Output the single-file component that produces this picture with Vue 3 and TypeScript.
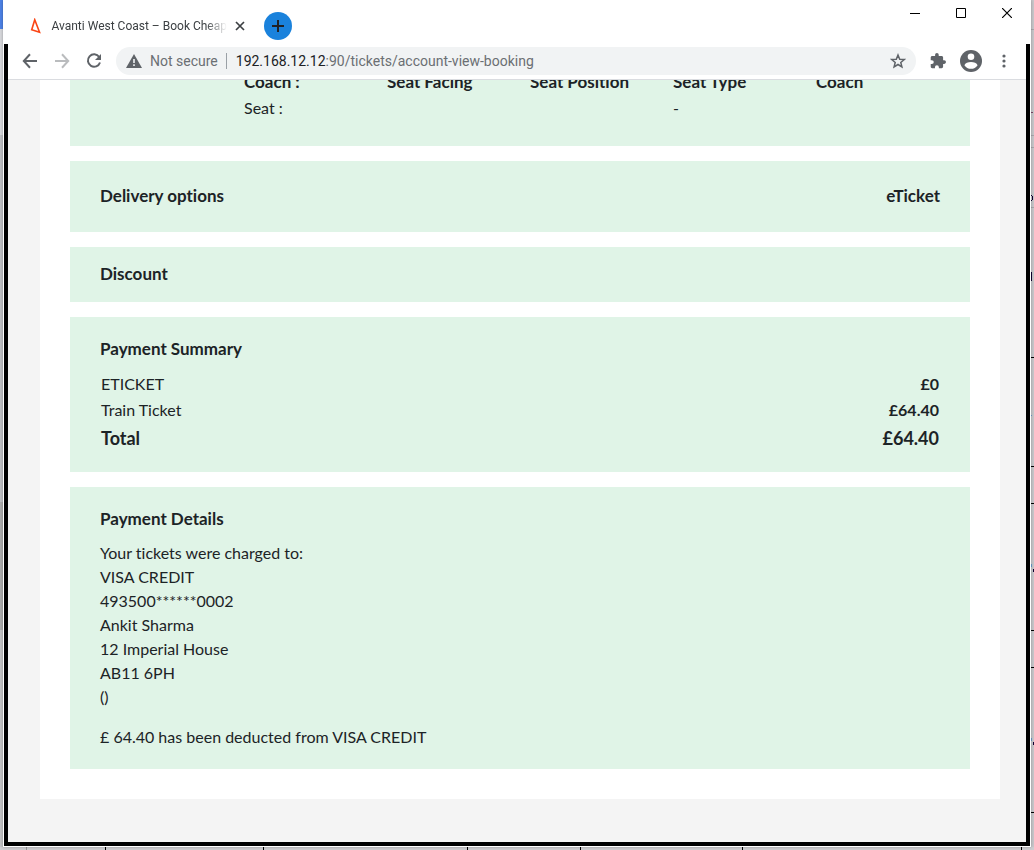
<script setup lang="ts">
interface PriceRow {
  label: string
  price: string
  total?: boolean
}

const seatHeads: string[] = ['Coach :', 'Seat Facing', 'Seat Position', 'Seat Type', 'Coach']
const seatCells: string[] = ['Seat :', '', '', '-', '']

const prices: PriceRow[] = [
  { label: 'ETICKET', price: '£0' },
  { label: 'Train Ticket', price: '£64.40' },
  { label: 'Total', price: '£64.40', total: true },
]

const chargedTo: string[] = [
  'Your tickets were charged to:',
  'VISA CREDIT',
  '493500******0002',
  'Ankit Sharma',
  '12 Imperial House',
  'AB11 6PH',
  '()',
]
</script>

<template>
  <div class="desktop">
    <svg class="edge-left" width="3" height="850" aria-hidden="true">
      <path fill="#d7d8dc" d="M0 0h3v135H0z" />
      <path fill="#4d82e6" d="M0 0h3v29H0z" />
      <path fill="#bfc0c4" d="M0 135h3v367H0z" />
      <path fill="#adadad" d="M0 502h3v128H0z" />
      <path fill="#c4c4c6" d="M0 630h3v220H0z" />
    </svg>
    <svg class="edge-right" width="3" height="850" aria-hidden="true">
      <path fill="#c9c8cb" d="M0 0h3v850H0z" />
      <path fill="#aaa9ad" d="M0 29h3v1H0zM0 135h3v1H0zM0 147h3v1H0zM0 207h3v1H0z" />
      <path fill="#000" d="M0 357h3v1H0zM0 466h3v1H0zM0 503h3v1H0zM0 630h3v1H0zM0 667h3v1H0zM0 812h3v1H0z" />
      <path fill="#7c4866" d="M1 107h1v5H0v1h2v-6z" />
      <path fill="#100030" d="M0 195h1v1h1v4H1v1H0v-1h1v-4H0zM0 272h1v9H0zM2 569h1v3H2zM2 742h1v3H2z" />
      <path fill="#6e9fcf" d="M0 564h1v3H0zM0 738h1v3H0zM0 415h1v1H0z" />
    </svg>
    <svg class="edge-bottom" width="1034" height="3" aria-hidden="true">
      <path fill="#cfced1" d="M0 0h1034v3H0z" />
      <path fill="#999" d="M26 0h1v3h-1z" />
      <path fill="#000" d="M105 0h1v3h-1zM263 0h1v3h-1zM467 0h1v3h-1zM580 0h1v3h-1zM742 0h1v3h-1zM1021 0h1v3h-1z" />
    </svg>

    <div class="window">
      <header class="titlebar">
        <div class="tab">
          <svg width="12" height="16" viewBox="0 0 12 16" fill="none" stroke="#fa4616" stroke-width="1.7" aria-hidden="true">
            <path d="M5 1.5 1.8 12l8.2 2.5L5 1.5z" />
          </svg>
          <span class="tab-title">Avanti West Coast – Book Cheap</span>
          <button class="plain" aria-label="Close tab">
            <svg width="10" height="10" viewBox="0 0 10 10" stroke="#3c4043" stroke-width="1.7"><path d="m1 1 8 8M9 1 1 9" /></svg>
          </button>
        </div>
        <button class="new-tab" aria-label="New tab">
          <svg width="12" height="12" viewBox="0 0 12 12" stroke="#202124" stroke-width="2"><path d="M6 0v12M0 6h12" /></svg>
        </button>
        <div class="controls">
          <button class="plain" aria-label="Minimize">
            <svg width="10" height="10" viewBox="0 0 10 10" stroke="#000"><path d="M0 5.5h10" /></svg>
          </button>
          <button class="plain" aria-label="Maximize">
            <svg width="10" height="10" viewBox="0 0 10 10" stroke="#000" fill="none"><path d="M.5.5h9v9h-9z" /></svg>
          </button>
          <button class="plain" aria-label="Close">
            <svg width="10" height="10" viewBox="0 0 10 10" stroke="#000" stroke-width="1.2"><path d="m0 0 10 10M10 0 0 10" /></svg>
          </button>
        </div>
      </header>

      <div class="frame">
        <nav class="toolbar" aria-label="Browser">
          <div class="nav-buttons">
            <button class="plain" aria-label="Back">
              <svg width="16" height="16" viewBox="0 0 16 16" stroke="#5f6368" stroke-width="2" fill="none"><path d="M15 8H2M8 1.300 1.800 8 8 14.700" /></svg>
            </button>
            <button class="plain" aria-label="Forward">
              <svg width="16" height="16" viewBox="0 0 16 16" stroke="#babcbe" stroke-width="2" fill="none"><path d="M1 8h13M8 1.300 14.200 8 8 14.700" /></svg>
            </button>
            <button class="plain" aria-label="Reload">
              <svg width="16" height="16" viewBox="0 0 16 16"><path fill="none" stroke="#5f6368" stroke-width="2" d="M13.200 4A6.200 6.200 0 1 0 14 9.500" /><path fill="#5f6368" d="M15 1v6H9z" /></svg>
            </button>
          </div>
          <div class="address">
            <svg width="16" height="14" viewBox="0 0 16 14" aria-hidden="true"><path fill="#5f6368" d="M8 0 16 14H0z" /><path fill="#f1f3f4" d="M7.200 5h1.600v4H7.200zM7.200 10.200h1.600v1.700H7.200z" /></svg>
            <span class="insecure">Not secure</span>
            <span class="url"><b>192.168.12.12</b>:90/tickets/account-view-booking</span>
            <button class="plain" aria-label="Bookmark this tab">
              <svg width="16" height="16" viewBox="0 0 16 16" fill="none" stroke="#5f6368" stroke-width="1.500"><path d="m8 2 1.700 4.200 4.600.300-3.500 3 1.100 4.400L8 11.500l-3.900 2.400 1.100-4.400-3.500-3 4.600-.300z" /></svg>
            </button>
          </div>
          <button class="plain" aria-label="Extensions">
            <svg width="16" height="16" viewBox="1 1 22 22" fill="#5f6368"><path d="M20.500 11H19V7c0-1.100-.900-2-2-2h-4V3.500a2.500 2.500 0 0 0-5 0V5H4c-1.100 0-2 .900-2 2v3.800h1.500a2.700 2.700 0 0 1 0 5.400H2V20c0 1.100.900 2 2 2h3.800v-1.500a2.700 2.700 0 0 1 5.400 0V22H17c1.100 0 2-.900 2-2v-4h1.500a2.500 2.500 0 0 0 0-5z" /></svg>
          </button>
          <button class="plain" aria-label="Profile">
            <svg width="22" height="22" viewBox="0 0 22 22"><circle cx="11" cy="11" r="11" fill="#5f6368" /><circle cx="11" cy="6.700" r="3.300" fill="#fff" /><path fill="#fff" d="M4.400 15.300C5.200 12.900 8 12.100 11 12.100s5.800.800 6.600 3.200a7.900 7.900 0 0 1-13.200 0z" /></svg>
          </button>
          <button class="plain menu" aria-label="Menu">
            <svg width="4" height="14" viewBox="0 0 4 14" fill="#5f6368"><circle cx="2" cy="2" r="1.600" /><circle cx="2" cy="7" r="1.600" /><circle cx="2" cy="12" r="1.600" /></svg>
          </button>
        </nav>

        <div class="viewport">
          <main class="booking">
            <section class="seats">
              <table>
                <thead>
                  <tr>
                    <td></td>
                    <th v-for="(head, i) in seatHeads" :key="i" scope="col">{{ head }}</th>
                  </tr>
                </thead>
                <tbody>
                  <tr>
                    <td></td>
                    <td v-for="(cell, i) in seatCells" :key="i">{{ cell }}</td>
                  </tr>
                </tbody>
              </table>
            </section>

            <section class="delivery">
              <h2>Delivery options</h2>
              <strong>eTicket</strong>
            </section>

            <section class="discount">
              <h2>Discount</h2>
            </section>

            <section class="summary">
              <h2>Payment Summary</h2>
              <table>
                <tbody>
                  <tr v-for="row in prices" :key="row.label" :class="{ total: row.total }">
                    <th scope="row">{{ row.label }}</th>
                    <td>{{ row.price }}</td>
                  </tr>
                </tbody>
              </table>
            </section>

            <section class="details">
              <h2>Payment Details</h2>
              <p><span v-for="line in chargedTo" :key="line">{{ line }}</span></p>
              <p>£ 64.40 has been deducted from VISA CREDIT</p>
            </section>
          </main>
        </div>
      </div>
    </div>
  </div>
</template>

<style>
body {
  margin: 0;
}
</style>

<style scoped>
.desktop {
  position: relative;
  box-sizing: border-box;
  height: 100vh;
  padding: 0 3px 3px;
  overflow: hidden;
  background: #cfced1;
}
.edge-left,
.edge-right,
.edge-bottom {
  position: absolute;
  display: block;
}
.edge-left {
  top: 0;
  left: 0;
}
.edge-right {
  top: 0;
  right: 0;
}
.edge-bottom {
  bottom: 0;
  left: 0;
}
.window {
  position: relative;
  box-sizing: border-box;
  display: flex;
  flex-direction: column;
  height: 100%;
  padding: 0 1px 1px;
  background: #fff;
  box-shadow: 0 0 3px rgba(0, 0, 0, 0.3);
  font-family: Roboto, "Open Sans", sans-serif;
}
button.plain {
  display: flex;
  padding: 0;
  border: 0;
  background: none;
}
.titlebar {
  display: flex;
  height: 44px;
  flex: none;
}
.tab {
  display: flex;
  align-items: center;
  width: 215px;
  height: 36px;
  margin: 8px 19px 0 26px;
}
.tab-title {
  flex: 1;
  margin: 0 8px 0 10px;
  color: #3c4043;
  font-size: 12px;
  line-height: 16px;
  white-space: nowrap;
  mask-image: linear-gradient(to right, #000 88%, transparent);
}
.new-tab {
  display: flex;
  align-items: center;
  justify-content: center;
  width: 28px;
  height: 28px;
  margin-top: 12px;
  padding: 0;
  border: 0;
  border-radius: 50%;
  background: #1a82dc;
}
.controls {
  display: flex;
  gap: 36px;
  margin: 8px 18px 0 auto;
}
.controls button {
  height: 10px;
}
.frame {
  display: flex;
  flex: 1;
  flex-direction: column;
  min-height: 0;
  border: solid #000;
  border-width: 0 4px 4px;
}
.toolbar {
  display: flex;
  align-items: center;
  gap: 14px;
  height: 34px;
  flex: none;
  padding: 0 20px 1px 14px;
  border-bottom: 1px solid #dadce0;
}
.nav-buttons {
  display: flex;
  gap: 16px;
}
.menu {
  margin-left: 6px;
}
.address {
  display: flex;
  flex: 1;
  align-items: center;
  height: 28px;
  padding: 0 10px;
  border-radius: 14px;
  background: #f1f3f4;
  color: #6b6f73;
  font-size: 14px;
  line-height: 18px;
}
.insecure {
  margin-left: 8px;
  padding-right: 8px;
  border-right: 1px solid #9aa0a6;
  line-height: 16px;
}
.url {
  flex: 1;
  margin-left: 9px;
}
.url b {
  color: #202124;
  font-weight: 400;
}
.viewport {
  display: flex;
  flex: 1;
  flex-direction: column;
  justify-content: flex-end;
  min-height: 0;
  overflow: hidden;
  background: #f4f4f4;
}
.booking {
  display: flex;
  flex: none;
  flex-direction: column;
  gap: 15px;
  margin: 0 26px 43px 32px;
  padding: 0 30px 30px;
  background: #fff;
  color: #1c2326;
  font-family: Lato, sans-serif;
  font-size: 16px;
  font-variant-ligatures: none;
  line-height: 24px;
}
section {
  padding: 20px 30px;
  background: #e0f4e7;
}
h2,
strong,
.seats th {
  margin: 0;
  font-size: 17px;
  font-weight: 700;
  line-height: 24px;
}
table {
  width: 100%;
  border-collapse: collapse;
}
th,
td {
  height: 26px;
  padding: 0;
  text-align: left;
}
.seats {
  padding: 20px 11px 25px 31px;
}
.seats table {
  table-layout: fixed;
}
.delivery {
  display: flex;
  justify-content: space-between;
  padding: 23px 30px 24px;
}
.discount {
  padding: 15px 30px 16px;
}
.summary {
  padding-bottom: 20px;
}
.summary table {
  margin-top: 10px;
}
.summary th {
  padding-left: 1px;
  font-weight: 400;
}
.summary td {
  padding-right: 1px;
  font-weight: 700;
  text-align: right;
}
.summary .total th,
.summary .total td {
  height: 29px;
  font-size: 18px;
  font-weight: 700;
}
.details p {
  margin: 10px 0 0;
}
.details p + p {
  margin-top: 16px;
}
.details span {
  display: block;
}
</style>
